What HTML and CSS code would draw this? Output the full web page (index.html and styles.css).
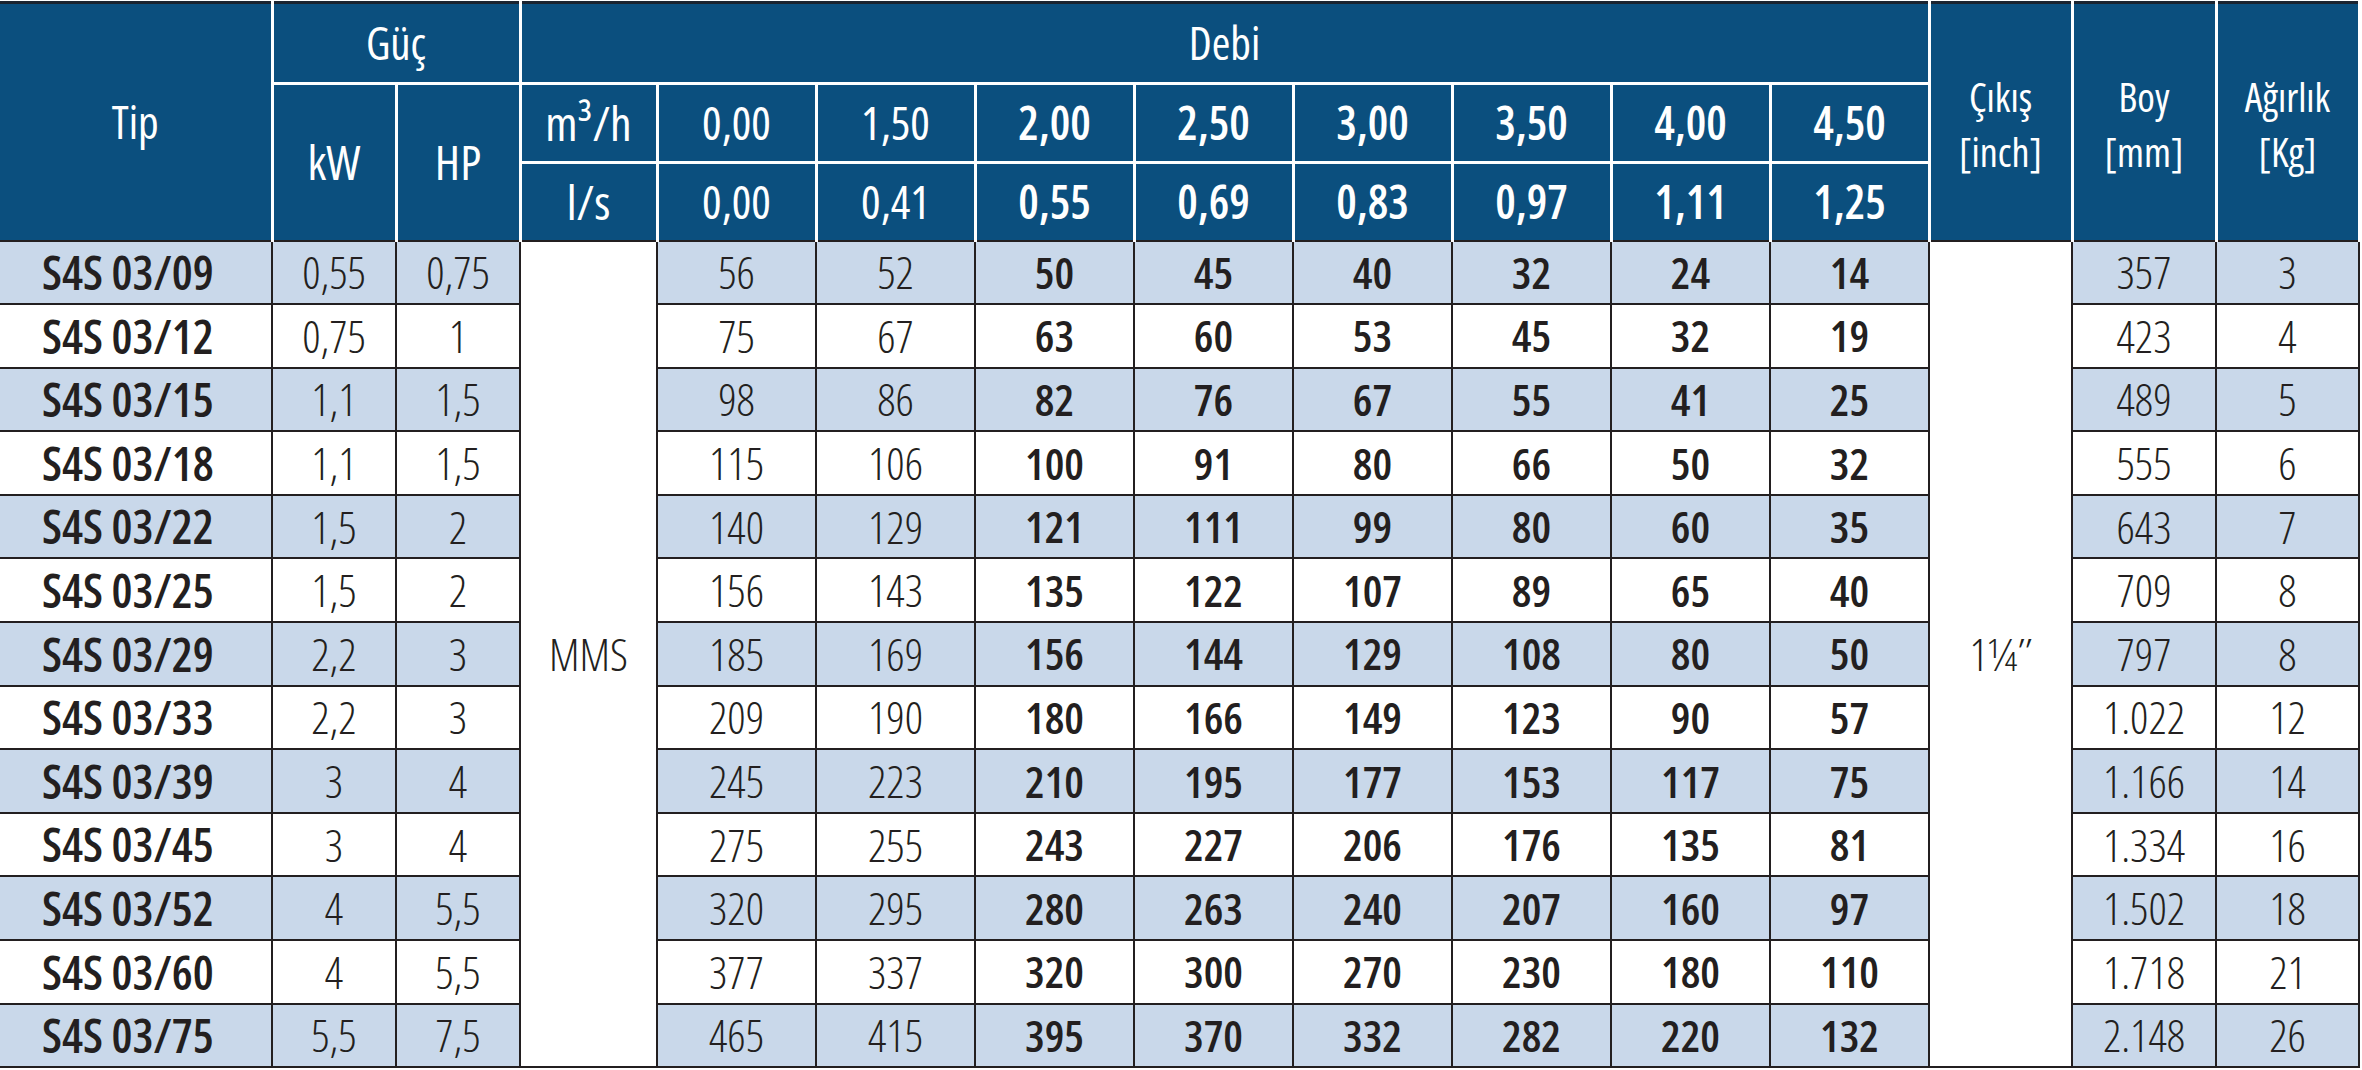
FILE: index.html
```html
<!DOCTYPE html>
<html lang="tr">
<head>
<meta charset="utf-8">
<title>S4S 03 Pompa Tablosu</title>
<link rel="stylesheet" href="styles.css">
</head>
<body>
<table class="spec">
  <colgroup>
    <col class="c-tip"><col class="c-pw"><col class="c-pw"><col class="c-unit">
    <col class="c-flow"><col class="c-flow"><col class="c-flow"><col class="c-flow">
    <col class="c-flow"><col class="c-flow"><col class="c-flow"><col class="c-flow">
    <col class="c-out"><col class="c-boy"><col class="c-out">
  </colgroup>
  <thead>
    <tr class="h1">
      <th rowspan="3" class="last mid">Tip</th>
      <th colspan="2" class="mid">Güç</th>
      <th colspan="9" class="mid">Debi</th>
      <th rowspan="3" class="last two"><span class="ln">Çıkış</span><span class="ln">[inch]</span></th>
      <th rowspan="3" class="last two"><span class="ln">Boy</span><span class="ln">[mm]</span></th>
      <th rowspan="3" class="last two end"><span class="ln">Ağırlık</span><span class="ln">[Kg]</span></th>
    </tr>
    <tr class="h2">
      <th rowspan="2" class="last lg">kW</th>
      <th rowspan="2" class="last lg">HP</th>
      <th class="lg">m³/h</th>
      <th class="num">0,00</th>
      <th class="num">1,50</th>
      <th class="num b">2,00</th>
      <th class="num b">2,50</th>
      <th class="num b">3,00</th>
      <th class="num b">3,50</th>
      <th class="num b">4,00</th>
      <th class="num b">4,50</th>
    </tr>
    <tr class="h3">
      <th class="last lg">l/s</th>
      <th class="last num">0,00</th>
      <th class="last num">0,41</th>
      <th class="last num b">0,55</th>
      <th class="last num b">0,69</th>
      <th class="last num b">0,83</th>
      <th class="last num b">0,97</th>
      <th class="last num b">1,11</th>
      <th class="last num b">1,25</th>
    </tr>
  </thead>
  <tbody>
    <tr class="alt"><td class="tip">S4S 03/09</td><td>0,55</td><td>0,75</td><td rowspan="13" class="mms">MMS</td><td>56</td><td>52</td><td class="b">50</td><td class="b">45</td><td class="b">40</td><td class="b">32</td><td class="b">24</td><td class="b">14</td><td rowspan="13" class="out">1¼″</td><td>357</td><td class="end">3</td></tr>
    <tr><td class="tip">S4S 03/12</td><td>0,75</td><td>1</td><td>75</td><td>67</td><td class="b">63</td><td class="b">60</td><td class="b">53</td><td class="b">45</td><td class="b">32</td><td class="b">19</td><td>423</td><td class="end">4</td></tr>
    <tr class="alt"><td class="tip">S4S 03/15</td><td>1,1</td><td>1,5</td><td>98</td><td>86</td><td class="b">82</td><td class="b">76</td><td class="b">67</td><td class="b">55</td><td class="b">41</td><td class="b">25</td><td>489</td><td class="end">5</td></tr>
    <tr><td class="tip">S4S 03/18</td><td>1,1</td><td>1,5</td><td>115</td><td>106</td><td class="b">100</td><td class="b">91</td><td class="b">80</td><td class="b">66</td><td class="b">50</td><td class="b">32</td><td>555</td><td class="end">6</td></tr>
    <tr class="alt"><td class="tip">S4S 03/22</td><td>1,5</td><td>2</td><td>140</td><td>129</td><td class="b">121</td><td class="b">111</td><td class="b">99</td><td class="b">80</td><td class="b">60</td><td class="b">35</td><td>643</td><td class="end">7</td></tr>
    <tr><td class="tip">S4S 03/25</td><td>1,5</td><td>2</td><td>156</td><td>143</td><td class="b">135</td><td class="b">122</td><td class="b">107</td><td class="b">89</td><td class="b">65</td><td class="b">40</td><td>709</td><td class="end">8</td></tr>
    <tr class="alt"><td class="tip">S4S 03/29</td><td>2,2</td><td>3</td><td>185</td><td>169</td><td class="b">156</td><td class="b">144</td><td class="b">129</td><td class="b">108</td><td class="b">80</td><td class="b">50</td><td>797</td><td class="end">8</td></tr>
    <tr><td class="tip">S4S 03/33</td><td>2,2</td><td>3</td><td>209</td><td>190</td><td class="b">180</td><td class="b">166</td><td class="b">149</td><td class="b">123</td><td class="b">90</td><td class="b">57</td><td>1.022</td><td class="end">12</td></tr>
    <tr class="alt"><td class="tip">S4S 03/39</td><td>3</td><td>4</td><td>245</td><td>223</td><td class="b">210</td><td class="b">195</td><td class="b">177</td><td class="b">153</td><td class="b">117</td><td class="b">75</td><td>1.166</td><td class="end">14</td></tr>
    <tr><td class="tip">S4S 03/45</td><td>3</td><td>4</td><td>275</td><td>255</td><td class="b">243</td><td class="b">227</td><td class="b">206</td><td class="b">176</td><td class="b">135</td><td class="b">81</td><td>1.334</td><td class="end">16</td></tr>
    <tr class="alt"><td class="tip">S4S 03/52</td><td>4</td><td>5,5</td><td>320</td><td>295</td><td class="b">280</td><td class="b">263</td><td class="b">240</td><td class="b">207</td><td class="b">160</td><td class="b">97</td><td>1.502</td><td class="end">18</td></tr>
    <tr><td class="tip">S4S 03/60</td><td>4</td><td>5,5</td><td>377</td><td>337</td><td class="b">320</td><td class="b">300</td><td class="b">270</td><td class="b">230</td><td class="b">180</td><td class="b">110</td><td>1.718</td><td class="end">21</td></tr>
    <tr class="alt"><td class="tip">S4S 03/75</td><td>5,5</td><td>7,5</td><td>465</td><td>415</td><td class="b">395</td><td class="b">370</td><td class="b">332</td><td class="b">282</td><td class="b">220</td><td class="b">132</td><td>2.148</td><td class="end">26</td></tr>
  </tbody>
</table>
</body>
</html>
```

FILE: styles.css
```css
html, body {
  margin: 0;
  padding: 0;
  background: #ffffff;
}

body {
  font-family: "Open Sans", "Noto Sans", sans-serif;
  font-stretch: 80%;
  color: #231f20;
}

.spec {
  border-collapse: collapse;
  table-layout: fixed;
  width: 2359px;
  margin-top: 1px;
}

.c-tip { width: 272px; }
.c-pw { width: 124px; }
.c-unit { width: 137px; }
.c-flow { width: 159px; }
.c-out { width: 143px; }
.c-boy { width: 144px; }

.spec th {
  background: #0b4f7e;
  color: #ffffff;
  font-weight: 400;
  font-size: 42px;
  line-height: 1.2;
  padding: 0;
  text-align: center;
  vertical-align: middle;
  border: 3px solid #ffffff;
}

.spec th:first-child {
  border-left: none;
}

.spec .h1 th {
  border-top: 3px solid #1b2430;
}

.spec th.last {
  border-bottom: 2px solid #231f20;
}

.spec th.mid {
  font-size: 45px;
}

.spec th.lg {
  font-size: 48px;
}

.spec th.two {
  padding-top: 4px;
  font-size: 40px;
  font-stretch: 85%;
}

.spec th.two .ln {
  display: block;
  height: 55px;
  line-height: 55px;
}

.spec th.num {
  font-size: 46px;
  font-stretch: 85%;
}

.spec th.num.b {
  font-weight: 600;
  font-stretch: 75%;
}

.spec .h1 { height: 81px; }
.spec .h2 { height: 79px; }
.spec .h3 { height: 78px; }

.spec td {
  font-size: 45px;
  font-weight: 300;
  line-height: 1.2;
  padding: 0;
  text-align: center;
  vertical-align: middle;
  border: 2px solid #231f20;
  background: #ffffff;
}

.spec tbody tr {
  height: 63.6px;
}

.spec tbody tr.alt td {
  background: #c9d8ea;
}

.spec td:first-child {
  border-left: none;
}

.spec td.b {
  font-size: 44px;
  font-weight: 600;
  font-stretch: 75%;
}

.spec td.tip {
  text-align: left;
  padding-left: 42px;
  font-size: 47px;
  font-weight: 600;
  font-stretch: 75%;
}

.spec tbody tr td.mms,
.spec tbody tr td.out {
  background: #ffffff;
  font-weight: 300;
  font-size: 45px;
  font-stretch: 75%;
}
```
